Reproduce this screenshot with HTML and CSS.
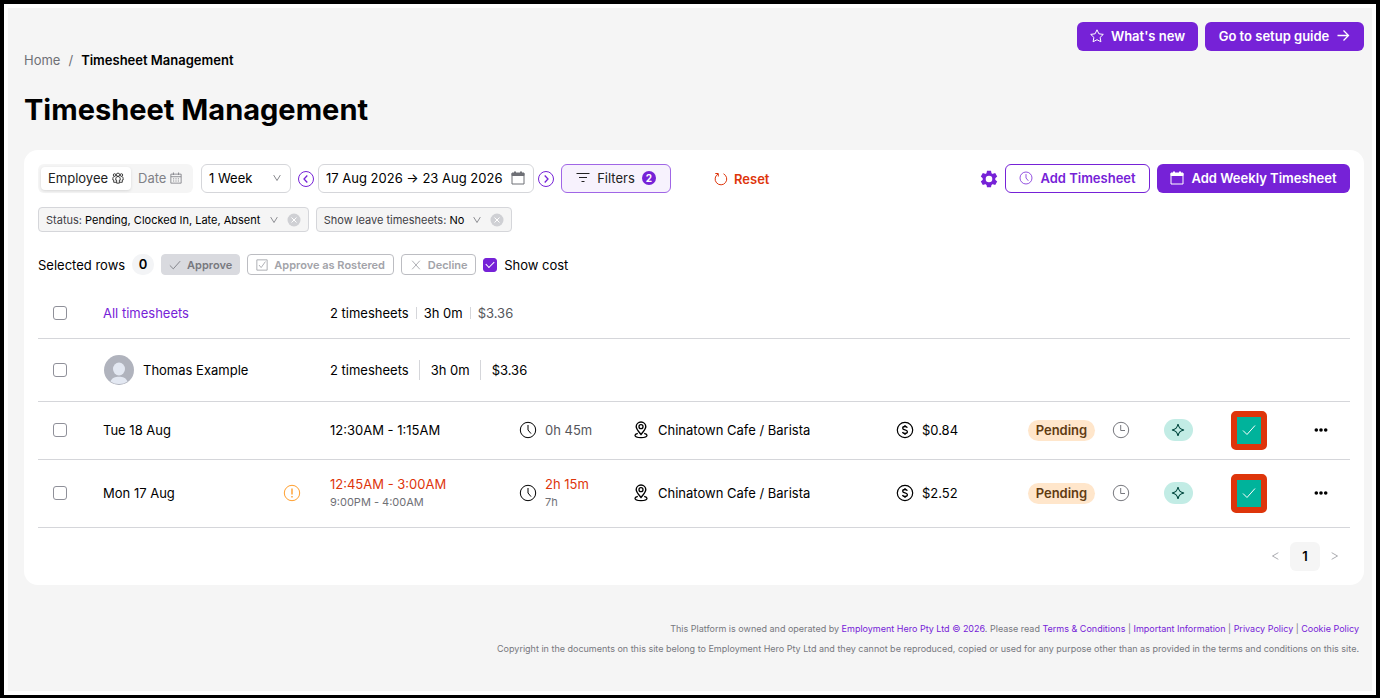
FILE: index.html
```html
<!doctype html>
<html lang="en">
  <head>
    <meta charset="utf-8">
    <title>Timesheet Management</title>
    <meta name="viewport" content="width=device-width, initial-scale=1">
    <link rel="stylesheet" href="styles.css">
  </head>
  <body>
    <svg class="sprite" aria-hidden="true">
      <symbol id="i-chevron" viewBox="0 0 12 12"><path d="M2 2.500L6 9L10 2.500" /></symbol>
      <symbol id="i-check" viewBox="0 0 14 14"><path d="M1 7.500L5 11.500L13 2.500" /></symbol>
      <symbol id="i-clear" viewBox="0 0 14 14"><circle cx="7" cy="7" r="6.500" fill="#cfd0d4" stroke="none" /><path d="M4.500 4.500l5 5M9.500 4.500l-5 5" stroke="#fff" /></symbol>
      <symbol id="i-clock" viewBox="0 0 18 18"><circle cx="9" cy="9" r="7.700" /><path d="M9 4v5l3 3.600" /></symbol>
      <symbol id="i-clock-l" viewBox="0 0 18 18"><circle cx="9" cy="9" r="7.700" /><path d="M8.700 4v5.500H13" /></symbol>
      <symbol id="i-calendar" viewBox="0 0 14 14"><path d="M1 2.500h12v10.500h-12z" /><path d="M1 2h12v2.500h-12z" fill="currentColor" /><path d="M4 .5v2M10 .5v2" stroke-width="2" /></symbol>
      <symbol id="i-pin" viewBox="0 0 18 18"><path stroke-width="1.400" d="M9 13.500C6 10 4.200 8 4.200 5.800a4.800 4.800 0 019.600 0C13.800 8 12 10 9 13.500z" /><circle cx="9" cy="5.700" r="2" stroke-width="1.300" /><path stroke-width="1.300" d="M5.800 12.300c-1.800.5-2.800 1.200-2.800 2 0 1.500 2.800 2.400 6 2.400s6-.9 6-2.400c0-.8-1-1.500-2.800-2" /></symbol>
      <symbol id="i-dollar" viewBox="0 0 18 18"><circle cx="9" cy="9" r="7.700" stroke-width="1.200" /><path stroke-width="1.300" d="M11.300 6.800C11 5.900 10.100 5.500 9 5.500c-1.400 0-2.300.7-2.300 1.700C6.700 9.500 11.400 8.300 11.400 10.800c0 1-1 1.700-2.400 1.700-1.300 0-2.200-.5-2.500-1.500M9 4v1.500M9 12.500v1.500" /></symbol>
      <symbol id="i-sparkle" viewBox="0 0 14 14"><path stroke-width="1.200" d="M7 1C7.700 5 9 6.300 13 7 9 7.700 7.700 9 7 13 6.300 9 5 7.700 1 7 5 6.300 6.300 5 7 1z" /></symbol>
      <symbol id="i-dots" viewBox="0 0 14 14"><g fill="currentColor" stroke="none"><circle cx="2.300" cy="7" r="1.800" /><circle cx="7" cy="7" r="1.800" /><circle cx="11.700" cy="7" r="1.800" /></g></symbol>
    </svg>

    <header class="page-header">
      <nav class="breadcrumb" aria-label="Breadcrumb">
        <a href="#">Home</a>
        <span>/</span>
        <strong>Timesheet Management</strong>
      </nav>
      <div class="header-actions">
        <button class="btn primary whats-new">
          <svg class="icon" viewBox="0 0 14 14"><path d="M7 .8l1.900 4 4.400.6-3.200 3 .8 4.400L7 10.700l-3.900 2.100.8-4.400-3.200-3 4.400-.6z" /></svg>
          What's new
        </button>
        <button class="btn primary setup">
          Go to setup guide
          <svg class="icon" viewBox="0 0 14 14"><path d="M1.500 6.500h11M7.500 1.500l5 5-5 5" stroke-width="1.300" /></svg>
        </button>
      </div>
    </header>

    <h1>Timesheet Management</h1>

    <main class="card">
      <div class="toolbar">
        <div class="segmented">
          <label>
            <input type="radio" name="view" checked>
            Employee
            <svg class="icon small" viewBox="0 0 14 14"><circle cx="7" cy="3.200" r="1.900" /><circle cx="3" cy="3.500" r="1.500" /><circle cx="11" cy="3.500" r="1.500" /><path d="M7 5.300c-1.800 0-2.600 1.200-2.600 2.700v1.500h1V13h3.200V9.500h1V8c0-1.500-.8-2.700-2.600-2.700zM3 5.300C1.700 5.300 1 6.300 1 7.500v1.800h1V12h3M11 5.300c1.300 0 2 1 2 2.200v1.800h-1V12H9" /></svg>
          </label>
          <label>
            <input type="radio" name="view">
            Date
            <svg class="icon small" viewBox="0 0 14 14"><path d="M1 2.500h12v10.500h-12zM1 5.500h12M4 .5v3M10 .5v3" /><path d="M3.500 8h7M3.500 10.500h7" stroke-dasharray="1.400 1.400" /></svg>
          </label>
        </div>
        <label class="field period">
          <select aria-label="Period">
            <option>1 Week</option>
            <option>2 Weeks</option>
            <option>1 Month</option>
          </select>
          <svg class="icon tiny"><use href="#i-chevron" /></svg>
        </label>
        <button class="round" aria-label="Previous">
          <svg class="icon large" viewBox="0 0 18 18"><circle cx="9" cy="9" r="7.500" /><path d="M10.300 5.500L7 9l3.300 3.500" stroke-width="1.300" /></svg>
        </button>
        <label class="field dates">
          <input type="text" aria-label="Date range" value="17 Aug 2026 → 23 Aug 2026">
          <svg class="icon"><use href="#i-calendar" /></svg>
        </label>
        <button class="round" aria-label="Next">
          <svg class="icon large" viewBox="0 0 18 18"><circle cx="9" cy="9" r="7.500" /><path d="M7.700 5.500L11 9l-3.300 3.500" stroke-width="1.300" /></svg>
        </button>
        <button class="btn filters">
          <svg class="icon" viewBox="0 0 14 14"><path d="M.5 2.500h13M3 6.500h8M5.500 10.500h3" /></svg>
          Filters
          <span class="count">2</span>
        </button>
        <button class="reset">
          <svg class="icon" viewBox="0 0 14 14"><path d="M9.500 1.800A5.800 5.800 0 114 2M1.300 1.500H4.300V4.500" /></svg>
          Reset
        </button>
        <button class="round settings" aria-label="Settings">
          <svg class="icon large" viewBox="0 0 18 18"><g fill="currentColor" stroke="none"><path fill-rule="evenodd" d="M9 2.700a6.300 6.300 0 100 12.600A6.300 6.300 0 009 2.700zm0 3a3.300 3.300 0 110 6.600 3.300 3.300 0 010-6.600z" /><path d="M7 .7h4l.6 3H6.400zM7 17.300h4l.6-3H6.400zM.8 6.500l2-3.500 3 1-2.700 4.600zM17.200 6.500l-2-3.500-3 1 2.700 4.600zM.8 11.500l2 3.500 3-1L3.100 9.400zM17.200 11.500l-2 3.500-3-1 2.700-4.600z" /></g></svg>
        </button>
        <button class="btn outline add">
          <svg class="icon"><use href="#i-clock" /></svg>
          Add Timesheet
        </button>
        <button class="btn primary add-weekly">
          <svg class="icon"><use href="#i-calendar" /></svg>
          Add Weekly Timesheet
        </button>
      </div>

      <div class="chips">
        <button class="chip status">
          <span>Status: <b>Pending, Clocked In, Late, Absent</b></span>
          <svg class="icon tiny"><use href="#i-chevron" /></svg>
          <svg class="icon"><use href="#i-clear" /></svg>
        </button>
        <button class="chip leave">
          <span>Show leave timesheets: <b>No</b></span>
          <svg class="icon tiny"><use href="#i-chevron" /></svg>
          <svg class="icon"><use href="#i-clear" /></svg>
        </button>
      </div>

      <div class="bulk">
        <span class="selected">Selected rows</span>
        <span class="zero">0</span>
        <button class="mini approve" disabled>
          <svg class="icon small"><use href="#i-check" /></svg>
          Approve
        </button>
        <button class="mini rostered" disabled>
          <svg class="icon small" viewBox="0 0 14 14"><path d="M1 1h12v12h-12zM3.500 7l2.500 3L11 3" /></svg>
          Approve as Rostered
        </button>
        <button class="mini decline" disabled>
          <svg class="icon small" viewBox="0 0 14 14"><path d="M2.500 2l9 10M11.500 2l-9 10" /></svg>
          Decline
        </button>
        <label class="show-cost">
          <input type="checkbox" class="box" checked>
          Show cost
        </label>
      </div>

      <table class="timesheets">
        <colgroup>
          <col class="c-check">
          <col class="c-name">
          <col class="c-warn">
          <col class="c-time">
          <col class="c-duration">
          <col>
          <col class="c-cost">
          <col class="c-status">
          <col class="c-source">
          <col class="c-approve">
          <col class="c-more">
        </colgroup>
        <tbody>
          <tr class="all">
            <td><input type="checkbox" class="box" aria-label="Select all timesheets"></td>
            <td colspan="2"><a href="#">All timesheets</a></td>
            <td colspan="8">
              <div class="totals">
                <span>2 timesheets</span>
                <span>3h 0m</span>
                <span class="muted">$3.36</span>
              </div>
            </td>
          </tr>
          <tr class="employee">
            <td><input type="checkbox" class="box" aria-label="Select Thomas Example"></td>
            <td colspan="2">
              <div class="person">
                <svg class="avatar" viewBox="0 0 30 30"><circle cx="15" cy="15" r="15" fill="#b0b3bd" /><ellipse cx="15" cy="14" rx="6" ry="6.500" fill="#e3e8f2" /><path d="M6.500 26.500C8 22.800 11 21.800 15 21.800s7 1 8.500 4.700A14.500 14.500 0 0115 29a14.500 14.500 0 01-8.500-2.500z" fill="#e3e8f2" /></svg>
                Thomas Example
              </div>
            </td>
            <td colspan="8">
              <div class="totals wide">
                <span>2 timesheets</span>
                <span>3h 0m</span>
                <span>$3.36</span>
              </div>
            </td>
          </tr>
          <tr class="entry">
            <td><input type="checkbox" class="box" aria-label="Select Tue 18 Aug"></td>
            <td>Tue 18 Aug</td>
            <td></td>
            <td>12:30AM - 1:15AM</td>
            <td><div class="with-icon"><svg class="icon large"><use href="#i-clock" /></svg><span class="muted">0h 45m</span></div></td>
            <td><div class="with-icon"><svg class="icon large"><use href="#i-pin" /></svg>Chinatown Cafe / Barista</div></td>
            <td><div class="with-icon"><svg class="icon large"><use href="#i-dollar" /></svg>$0.84</div></td>
            <td><div class="state"><span class="pending">Pending</span><svg class="icon large"><use href="#i-clock-l" /></svg></div></td>
            <td><span class="source"><svg class="icon"><use href="#i-sparkle" /></svg></span></td>
            <td><button class="tick" aria-label="Approve"><svg class="icon"><use href="#i-check" /></svg></button></td>
            <td><button class="more" aria-label="More"><svg class="icon"><use href="#i-dots" /></svg></button></td>
          </tr>
          <tr class="entry tall">
            <td><input type="checkbox" class="box" aria-label="Select Mon 17 Aug"></td>
            <td>Mon 17 Aug</td>
            <td><svg class="icon large warn" viewBox="0 0 18 18"><circle cx="9" cy="9" r="7.700" /><path d="M9 4.500v6M9 12v1.500" stroke-width="1.400" /></svg></td>
            <td><span class="late">12:45AM - 3:00AM</span><small>9:00PM - 4:00AM</small></td>
            <td><div class="with-icon"><svg class="icon large"><use href="#i-clock" /></svg><div><span class="late">2h 15m</span><small>7h</small></div></div></td>
            <td><div class="with-icon"><svg class="icon large"><use href="#i-pin" /></svg>Chinatown Cafe / Barista</div></td>
            <td><div class="with-icon"><svg class="icon large"><use href="#i-dollar" /></svg>$2.52</div></td>
            <td><div class="state"><span class="pending">Pending</span><svg class="icon large"><use href="#i-clock-l" /></svg></div></td>
            <td><span class="source"><svg class="icon"><use href="#i-sparkle" /></svg></span></td>
            <td><button class="tick" aria-label="Approve"><svg class="icon"><use href="#i-check" /></svg></button></td>
            <td><button class="more" aria-label="More"><svg class="icon"><use href="#i-dots" /></svg></button></td>
          </tr>
        </tbody>
      </table>

      <nav class="pagination" aria-label="Pages">
        <button aria-label="Previous page"><svg class="icon tiny" viewBox="0 0 12 12"><path d="M10 2L3 6l7 4" /></svg></button>
        <button class="current">1</button>
        <button aria-label="Next page"><svg class="icon tiny" viewBox="0 0 12 12"><path d="M2 2l7 4-7 4" /></svg></button>
      </nav>
    </main>

    <footer>
      <p>This Platform is owned and operated by <a href="#">Employment Hero Pty Ltd © 2026</a>. Please read <a href="#">Terms &amp; Conditions</a> | <a href="#">Important Information</a> | <a href="#">Privacy Policy</a> | <a href="#">Cookie Policy</a></p>
      <p>Copyright in the documents on this site belong to Employment Hero Pty Ltd and they cannot be reproduced, copied or used for any purpose other than as provided in the terms and conditions on this site.</p>
    </footer>
  </body>
</html>
```
FILE: styles.css
```css
* {
  margin: 0;
  padding: 0;
  box-sizing: border-box;
}

html {
  background: #fff;
  border: 4px solid #000;
  min-height: 100vh;
  display: flex;
}

body {
  flex: 1;
  min-width: 0;
  margin: 4px;
  padding: 14px 8px 0 16px;

  background: #f5f5f5;
  color: #000;
  font-family: Inter, "Liberation Sans", sans-serif;
  font-size: 13px;
  line-height: 20px;
}

button, input, select {
  font: inherit;
  color: inherit;
  border: none;
  background: none;
}

button {
  display: flex;
  align-items: center;
  justify-content: center;
  white-space: nowrap;
}

a {
  color: #7622d7;
  text-decoration: none;
}

.sprite {
  display: none;
}

.icon {
  width: 14px;
  height: 14px;
  flex: none;

  fill: none;
  stroke: currentColor;
}

.icon.tiny {
  width: 10px;
  height: 10px;
}

.icon.small {
  width: 12px;
  height: 12px;
}

.icon.large {
  width: 18px;
  height: 18px;
}

.muted {
  color: #55565b;
}

/* header */

.page-header {
  display: flex;
  justify-content: space-between;
  align-items: flex-start;
}

.breadcrumb {
  margin-top: 28px;

  display: flex;
  gap: 8px;
  color: #6f7076;
}

.breadcrumb a {
  color: inherit;
}

.breadcrumb strong {
  color: #000;
  font-weight: 600;
}

.header-actions {
  display: flex;
  gap: 7px;
}

h1 {
  margin: 20px 0;
  font-size: 29px;
  line-height: 40px;
}

.btn {
  height: 29px;
  padding-bottom: 1px;
  gap: 7px;
  border-radius: 6px;
}

.btn.primary {
  background: #7622d7;
  color: #fff;
  font-weight: 600;
}

.btn.outline {
  border: 1px solid #7622d7;
  background: #fff;
  color: #7622d7;
  font-weight: 600;
}

.whats-new {
  min-width: 121px;
}

.setup {
  min-width: 159px;
}

/* card */

.card {
  padding: 14px;
  border-radius: 14px;
  background: #fff;
}

.toolbar {
  display: flex;
  align-items: center;
}

.segmented {
  height: 29px;
  width: 155px;
  padding: 3px;
  margin-right: 8px;

  display: flex;
  border-radius: 6px;
  background: #f5f5f5;
  color: #808187;
}

.segmented label {
  padding: 0 7px 2px;

  display: flex;
  align-items: center;
  gap: 4px;
  border-radius: 4px;
}

.segmented label:has(:checked) {
  background: #fff;
  color: #222;
  box-shadow: 0 1px 3px rgba(0, 0, 0, 0.12);
}

.segmented input {
  appearance: none;
  width: 0;
  margin-right: -4px;
}

.field {
  height: 29px;
  padding: 0 8px 1px 7px;

  display: flex;
  align-items: center;
  border: 1px solid #d5d6da;
  border-radius: 6px;
  background: #fff;
}

.field select, .field input {
  flex: 1;
  width: 0;
  appearance: none;
}

.field .icon {
  color: #6f7076;
}

.period {
  width: 90px;
  margin-right: 6px;
}

.dates {
  width: 216px;
  margin: 0 3px;
}

.round {
  width: 18px;
  height: 18px;
  color: #7622d7;
}

.filters {
  width: 110px;
  margin-left: 6px;

  border: 1px solid #a066e6;
  background: #f7f2fd;
  color: #222;
}

.count {
  width: 14px;
  height: 14px;

  border-radius: 7px;
  background: #7622d7;
  color: #fff;
  font-size: 10px;
  font-weight: 700;
  line-height: 14px;
}

.reset {
  margin-left: 43px;
  gap: 6px;
  color: #de350b;
  font-weight: 600;
}

.settings {
  margin-left: auto;
}

.add {
  width: 145px;
  margin: 0 7px;
}

.add-weekly {
  width: 193px;
}

.chips {
  margin-top: 14px;

  display: flex;
  gap: 7px;
}

.chip {
  height: 25px;
  padding: 0 7px;

  border: 1px solid #d5d6da;
  border-radius: 4px;
  background: #f5f5f5;
  color: #3f4045;
  font-size: 11px;
}

.chip span {
  margin-right: auto;
}

.chip .icon {
  margin-left: 8px;
  color: #77787e;
}

.chip b {
  color: #000;
  font-weight: 400;
}

.status {
  width: 271px;
}

.leave {
  width: 196px;
}

.bulk {
  margin-top: 22px;

  display: flex;
  align-items: center;
  gap: 7px;
}

.zero {
  width: 22px;
  height: 21px;

  border-radius: 10px;
  background: #f3f4f6;
  font-weight: 600;
  text-align: center;
}

.mini {
  height: 21px;
  gap: 6px;

  border: 1px solid #bcbdc2;
  border-radius: 4px;
  color: #a2a3a9;
  font-size: 11px;
  font-weight: 600;
}

.approve {
  width: 79px;
  border-color: #d9dadf;
  background: #d9dadf;
  color: #77787e;
}

.rostered {
  width: 147px;
}

.decline {
  width: 75px;
}

.show-cost {
  display: flex;
  align-items: center;
  gap: 7px;
}

.box {
  appearance: none;
  width: 14px;
  height: 14px;

  display: grid;
  place-items: center;
  border: 1px solid #8f9099;
  border-radius: 3px;
  background: #fff;
}

.box:checked {
  border-color: #7622d7;
  background: #7622d7;
}

.box:checked::before {
  content: "";
  width: 7px;
  height: 4px;
  margin-bottom: 2px;
  border: solid #fff;
  border-width: 0 0 1px 1px;
  transform: rotate(-45deg);
}

/* table */

.timesheets {
  width: 100%;
  margin-top: 14px;
  table-layout: fixed;
  border-collapse: collapse;
}

.timesheets td {
  border-bottom: 1px solid #d5d6da;
  white-space: nowrap;
}

.timesheets td:first-child {
  padding-left: 15px;
}

.c-check {
  width: 65px;
}

.c-name {
  width: 180px;
}

.c-warn {
  width: 47px;
}

.c-time {
  width: 189px;
}

.c-duration {
  width: 113px;
}

.c-cost {
  width: 132px;
}

.c-status {
  width: 136px;
}

.c-source {
  width: 67px;
}

.c-approve {
  width: 83px;
}

.c-more {
  width: 36px;
}

.all {
  height: 49px;
}

.employee {
  height: 63px;
}

.entry {
  height: 58px;
}

.entry.tall {
  height: 68px;
}

.person {
  display: flex;
  align-items: center;
  gap: 9px;
}

.avatar {
  width: 30px;
  height: 30px;
  margin-left: 1px;
}

.totals {
  display: flex;
  align-items: center;
  line-height: 12px;
}

.totals span + span {
  margin-left: 7px;
  padding-left: 7px;
  border-left: 1px solid #d5d6da;
}

.totals.wide {
  line-height: 20px;
}

.totals.wide span + span {
  margin-left: 10px;
  padding-left: 11px;
}

.with-icon {
  display: flex;
  align-items: center;
  gap: 8px;
}

.late {
  display: block;
  color: #de350b;
}

.timesheets small {
  display: block;
  padding-bottom: 2px;
  color: #6f7076;
  font-size: 11px;
  line-height: 16px;
}

.warn {
  display: block;
  color: #ff9f2e;
}

.state {
  display: flex;
  align-items: center;
  gap: 17px;
  color: #77787e;
}

.pending {
  width: 67px;
  height: 21px;

  border-radius: 11px;
  background: #ffe6cb;
  color: #5f3b12;
  font-weight: 600;
  text-align: center;
}

.source {
  width: 29px;
  height: 22px;

  display: flex;
  align-items: center;
  justify-content: center;
  border-radius: 11px;
  background: #c2ece5;
  color: #00483f;
}

/* the green button sits inside a thick red frame */
.tick {
  width: 36px;
  height: 39px;

  border: 6px solid #de350b;
  border-radius: 5px;
  background: #00b39b;
  color: #fff;
}

.pagination {
  margin-top: 14px;

  display: flex;
  justify-content: flex-end;
}

.pagination button {
  width: 30px;
  height: 29px;
  color: #9a9ba1;
}

.pagination .current {
  border-radius: 6px;
  background: #f5f5f5;
  color: #000;
  font-weight: 600;
}

footer {
  margin: 34px 5px 32px 0;

  color: #77787e;
  font-size: 9px;
  text-align: right;
}
```
